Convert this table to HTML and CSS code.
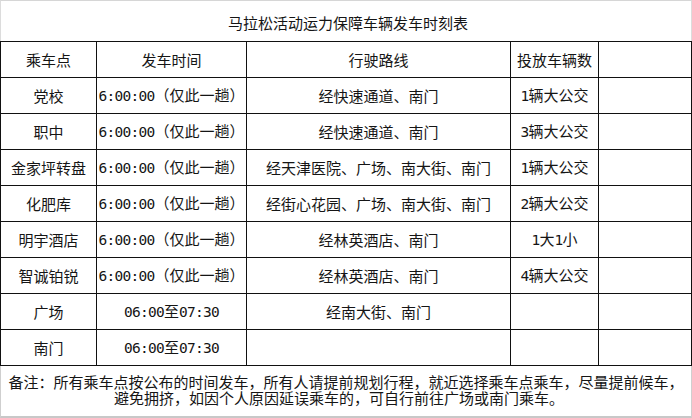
FILE: index.html
```html
<!DOCTYPE html>
<html lang="zh-CN">
<head>
<meta charset="utf-8">
<title>马拉松活动运力保障车辆发车时刻表</title>
<link rel="stylesheet" href="styles.css">
</head>
<body>
<div class="sheet">
  <div class="title">马拉松活动运力保障车辆发车时刻表</div>
  <table class="schedule">
    <colgroup>
      <col class="c-stop">
      <col class="c-time">
      <col class="c-route">
      <col class="c-count">
      <col class="c-blank">
    </colgroup>
    <tr><td>乘车点</td><td>发车时间</td><td>行驶路线</td><td>投放车辆数</td><td></td></tr>
    <tr><td>党校</td><td><span class="num">6:00:00</span>（仅此一趟）</td><td>经快速通道、南门</td><td><span class="num">1</span>辆大公交</td><td></td></tr>
    <tr><td>职中</td><td><span class="num">6:00:00</span>（仅此一趟）</td><td>经快速通道、南门</td><td><span class="num">3</span>辆大公交</td><td></td></tr>
    <tr><td>金家坪转盘</td><td><span class="num">6:00:00</span>（仅此一趟）</td><td>经天津医院、广场、南大街、南门</td><td><span class="num">1</span>辆大公交</td><td></td></tr>
    <tr><td>化肥库</td><td><span class="num">6:00:00</span>（仅此一趟）</td><td>经街心花园、广场、南大街、南门</td><td><span class="num">2</span>辆大公交</td><td></td></tr>
    <tr><td>明宇酒店</td><td><span class="num">6:00:00</span>（仅此一趟）</td><td>经林英酒店、南门</td><td><span class="num">1</span>大<span class="num">1</span>小</td><td></td></tr>
    <tr><td>智诚铂锐</td><td><span class="num">6:00:00</span>（仅此一趟）</td><td>经林英酒店、南门</td><td><span class="num">4</span>辆大公交</td><td></td></tr>
    <tr><td>广场</td><td><span class="num">06:00</span>至<span class="num">07:30</span></td><td>经南大街、南门</td><td></td><td></td></tr>
    <tr><td>南门</td><td><span class="num">06:00</span>至<span class="num">07:30</span></td><td></td><td></td><td></td></tr>
  </table>
  <div class="note">
    <p class="note-line">备注：所有乘车点按公布的时间发车，所有人请提前规划行程，就近选择乘车点乘车，尽量提前候车，</p>
    <p class="note-line note-line-2">避免拥挤，如因个人原因延误乘车的，可自行前往广场或南门乘车。</p>
  </div>
</div>
</body>
</html>
```
FILE: styles.css
```css
html, body {
  margin: 0;
  padding: 0;
  background: #ffffff;
}

.sheet {
  width: 692px;
  height: 418px;
  box-sizing: border-box;
  font-family: "Noto Sans CJK SC", "Noto Sans", sans-serif;
  color: #151515;
  font-size: 15px;
  background: #fff;
}

.title {
  height: 41px;
  box-sizing: border-box;
  border-top: 1px solid #d6d6d6;
  border-left: 1px solid #dcdcdc;
  border-right: 1px solid #dcdcdc;
  display: flex;
  align-items: center;
  justify-content: center;
  padding-top: 3px;
  padding-left: 4px;
  font-size: 15px;
}

.schedule {
  border-collapse: collapse;
  table-layout: fixed;
  width: 691px;
}

.c-stop { width: 96px; }
.c-time { width: 150px; }
.c-route { width: 264px; }
.c-count { width: 88px; }
.c-blank { width: 93px; }

.schedule td {
  border: 1px solid #111;
  height: 35px;
  padding: 0;
  text-align: center;
  vertical-align: middle;
  white-space: nowrap;
  line-height: 18px;
}

.num {
  font-family: "DejaVu Sans Mono", monospace;
  font-size: 14.5px;
  letter-spacing: -0.75px;
}

.note {
  height: 52px;
  box-sizing: border-box;
  border-left: 1px solid #cfcfcf;
  border-right: 1px solid #cfcfcf;
  border-bottom: 2px solid #c8c8c8;
  padding-top: 8px;
  display: flex;
  flex-direction: column;
  overflow: hidden;
}

.note-line {
  margin: 0;
  height: 16px;
  line-height: 16px;
  font-size: 15px;
  text-align: center;
  white-space: nowrap;
}

.note-line-2 {
  padding-right: 14px;
}
```
